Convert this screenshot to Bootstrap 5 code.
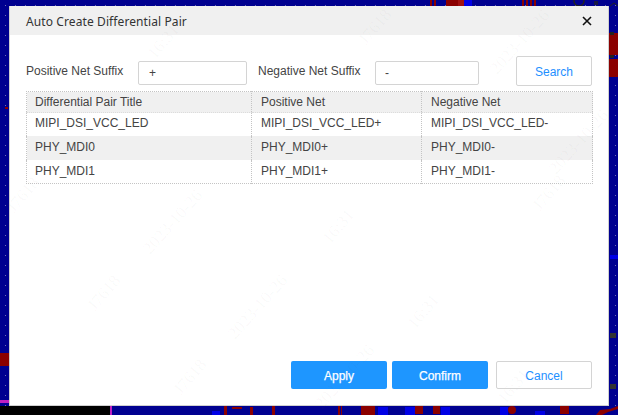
<!DOCTYPE html>
<html lang="en">
<head>
<meta charset="utf-8">
<title>Auto Create Differential Pair</title>
<link href="https://cdn.jsdelivr.net/npm/bootstrap@5.3.0/dist/css/bootstrap.min.css" rel="stylesheet">
<style>
html,body{height:100%;}
body{position:relative;overflow:hidden;margin:0;padding:6px 9px 0;background:#000090;font-family:"Liberation Sans",Arial,sans-serif;font-size:12px;color:#444;}
.pcb-canvas,.wm-layer{position:absolute;left:0;top:0;width:618px;height:415px;pointer-events:none;}
.wm-layer{z-index:5;}
.wm-layer text{font-family:"Liberation Serif",serif;font-size:17px;fill:rgba(110,110,110,.04);}
.dlg{position:relative;width:600px;height:400px;background:#fff;border:1px solid #d0d0d0;border-width:0 1px 1px 1px;display:flex;flex-direction:column;}
.dlg-head{height:29px;background:#f0f0f0;padding:0 15px 0 16px;display:flex;align-items:center;justify-content:space-between;flex:none;}
.dlg-title{font-family:"Noto Sans",sans-serif;font-size:12px;color:#333;letter-spacing:.1px;padding-top:2px;}
.dlg-x{border:0;background:none;padding:0;width:12px;height:12px;display:flex;}
.dlg-body{flex:1;padding:21px 16px 0;display:flex;flex-direction:column;}
.filter-row{height:30px;display:flex;align-items:center;}
.lbl{color:#444;}
.lbl-pos{width:112px;}
.lbl-neg{width:117px;margin-left:11px;}
.suffix{height:24px;border:1px solid #d4d4d4;border-radius:2px;padding:1px 8px 0 9px;font-size:12px;color:#444;box-shadow:none;margin-top:3px;}
.suffix-pos{width:109px;padding-left:10px;}
.suffix-neg{width:104px;}
.btn-hq{height:30px;width:76px;padding:1px 0 0;font-size:12px;border-radius:2px;background:#fff;border:1px solid #d4d4d4;color:#1e90ff;}
.btn-search{margin-left:37px;}
.btn-fill{height:28px;width:96px;padding:1px 0 0;font-size:12px;border-radius:2px;background:#1e96ff;border:0;color:#fff;-webkit-text-stroke:.25px #fff;}
.btn-ghost{height:28px;width:96px;}
.pair-table{width:566px;margin:5px 0 0;table-layout:fixed;border-collapse:collapse;border:1px dotted #c4c4c4;font-size:12px;--bs-table-color:#444;--bs-table-border-color:#c4c4c4;}
.pair-table th,.pair-table td{padding:0 0 0 9px;font-weight:400;vertical-align:middle;border:0;border-left:1px dotted #c4c4c4;box-shadow:none;color:#444;}
.pair-table th:first-child,.pair-table td:first-child{padding-left:8px;border-left:0;}
.pair-table thead th{height:21px;background:#f0f0f0;border-bottom:1px dotted #dcdcdc;}
.pair-table tbody td{height:23px;padding-bottom:2px;background:#fff;}
.pair-table tbody tr.alt td{height:24px;padding-bottom:1px;background:#f0f0f0;}
.pair-table tbody tr.last td{height:24px;padding-bottom:0;}
.dlg-foot{margin-top:auto;padding-bottom:16px;display:flex;justify-content:flex-end;}
.gap-fill{margin-right:5px;}
.gap-fill-2{margin-right:8px;}
</style>
</head>
<body>
<svg class="pcb-canvas" viewBox="0 0 618 415" xmlns="http://www.w3.org/2000/svg">
  <defs>
    <pattern id="dots" x="5" y="5" width="10" height="10" patternUnits="userSpaceOnUse"><rect width="1" height="1" fill="#7070b0"/></pattern>
  </defs>
  <rect width="618" height="415" fill="#000090"/>
  <rect y="406" width="110" height="9" fill="#000"/>
  <rect width="618" height="415" fill="url(#dots)"/>
  <g fill="#8b0000">
    <rect y="353" width="9" height="13"/>
    <rect x="609" y="33" width="9" height="22"/>
    <rect x="609" y="59" width="9" height="18"/>
    <rect x="430" width="2" height="6"/><rect x="434" width="2" height="6"/>
    <rect x="446" width="12" height="6"/><rect x="458" width="6" height="6" fill="#a01010"/>
    <rect x="522" width="2" height="6"/><rect x="526" width="2" height="6"/><rect x="530" width="2" height="6"/><rect x="534" width="2" height="6"/>
    <rect x="224" y="406" width="3" height="9"/><rect x="232" y="407" width="10" height="2"/><rect x="250" y="407" width="3" height="8"/><rect x="272" y="406" width="3" height="9"/>
    <rect x="338" y="406" width="2" height="9"/><rect x="341" y="406" width="1" height="9"/>
    <rect x="361" y="406" width="14" height="9"/>
    <rect x="415" y="406" width="8" height="8"/><rect x="433" y="406" width="7" height="8"/>
    <circle cx="512" cy="410" r="4"/>
    <rect x="560" y="406" width="9" height="8"/>
    <path d="M596 415l4-5 10-1 8-3v3l-10 3-6 3z"/>
  </g>
  <g fill="#0000e6">
    <rect x="464" width="8" height="6"/>
    <rect x="378" y="407" width="10" height="8"/><rect x="405" y="407" width="10" height="8"/><rect x="441" y="407" width="9" height="8"/>
    <rect x="212" y="411" width="8" height="4"/><rect x="500" y="407" width="8" height="8"/><rect x="535" y="411" width="10" height="4"/>
    <rect x="610" y="255" width="8" height="4"/>
  </g>
  <rect y="400" width="9" height="3" fill="#c020c0"/>
  <rect x="110" y="406" width="2" height="9" fill="#c020c0"/>
  <path d="M610 6l4-3 4 3" fill="none" stroke="#222" stroke-width="1"/>
  <rect x="594" y="1" width="4" height="4" fill="#222" opacity=".7"/>
  <circle cx="579" cy="1" r="5" fill="none" stroke="#222" stroke-width="1.5"/>
  <rect x="5" y="107" width="3" height="2" fill="#8b0000"/>
  <rect x="610" y="32" width="4" height="3" fill="#222"/><rect x="610" y="55" width="4" height="3" fill="#222"/>
  <rect x="610" y="333" width="6" height="5" fill="#333"/><rect x="610" y="384" width="6" height="5" fill="#333"/>
</svg>

<div class="dlg">
  <div class="dlg-head">
    <span class="dlg-title">Auto Create Differential Pair</span>
    <button type="button" class="dlg-x" aria-label="Close">
      <svg width="12" height="12" viewBox="0 0 12 12"><path d="M2 2l8 8M10 2l-8 8" stroke="#111" stroke-width="1.6" fill="none"/></svg>
    </button>
  </div>
  <div class="dlg-body">
    <div class="filter-row">
      <label class="lbl lbl-pos" for="posIn">Positive Net Suffix</label>
      <input id="posIn" class="form-control suffix suffix-pos" value="+">
      <label class="lbl lbl-neg" for="negIn">Negative Net Suffix</label>
      <input id="negIn" class="form-control suffix suffix-neg" value="-">
      <button type="button" class="btn btn-hq btn-search">Search</button>
    </div>
    <table class="table pair-table">
      <colgroup><col style="width:225px"><col style="width:170px"><col style="width:171px"></colgroup>
      <thead><tr><th>Differential Pair Title</th><th>Positive Net</th><th>Negative Net</th></tr></thead>
      <tbody>
        <tr><td>MIPI_DSI_VCC_LED</td><td>MIPI_DSI_VCC_LED+</td><td>MIPI_DSI_VCC_LED-</td></tr>
        <tr class="alt"><td>PHY_MDI0</td><td>PHY_MDI0+</td><td>PHY_MDI0-</td></tr>
        <tr class="last"><td>PHY_MDI1</td><td>PHY_MDI1+</td><td>PHY_MDI1-</td></tr>
      </tbody>
    </table>
    <div class="dlg-foot">
      <button type="button" class="btn btn-fill gap-fill">Apply</button>
      <button type="button" class="btn btn-fill gap-fill-2">Confirm</button>
      <button type="button" class="btn btn-hq btn-ghost">Cancel</button>
    </div>
  </div>
</div>

<svg class="wm-layer" viewBox="0 0 618 415" xmlns="http://www.w3.org/2000/svg">
  <text transform="translate(95 312) rotate(-50)">J7618</text>
  <text transform="translate(14 214) rotate(-50)">J7618</text>
  <text transform="translate(181 396) rotate(-50)">J7618</text>
  <text transform="translate(366 46) rotate(-50)">J7618</text>
  <text transform="translate(540 212) rotate(-50)">J7618</text>
  <text transform="translate(150 255) rotate(-48)">2023-10-26</text>
  <text transform="translate(235 340) rotate(-48)">2023-10-26</text>
  <text transform="translate(322 410) rotate(-48)">2023-10-26</text>
  <text transform="translate(497 75) rotate(-48)">2023-10-26</text>
  <text transform="translate(556 175) rotate(-48)">2023-10-26</text>
  <text transform="translate(155 60) rotate(-50)">16:31</text>
  <text transform="translate(330 245) rotate(-50)">16:31</text>
  <text transform="translate(415 330) rotate(-50)">16:31</text>
  <text transform="translate(505 405) rotate(-50)">16:31</text>
</svg>
</body>
</html>
